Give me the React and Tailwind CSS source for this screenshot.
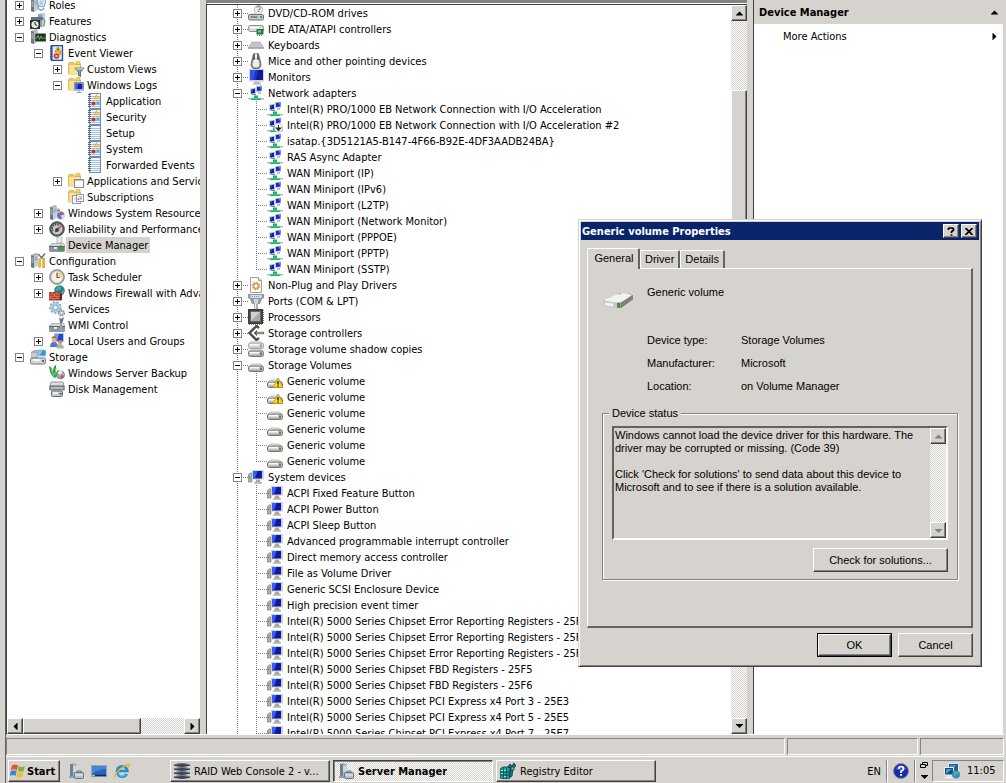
import React from "react";

const RAISED =
  "bg-[#d6d3ce] border border-t-white border-l-white border-b-[#424142] border-r-[#424142] shadow-[inset_-1px_-1px_0_#848284]";
const CHECKER =
  "bg-[conic-gradient(#fff_25%,#d6d3ce_0_50%,#fff_0_75%,#d6d3ce_0)] bg-[length:2px_2px]";
const DOTS_V =
  "bg-[repeating-linear-gradient(to_bottom,#848284_0_1px,transparent_1px_2px)]";
const DOTS_H =
  "bg-[repeating-linear-gradient(to_right,#848284_0_1px,transparent_1px_2px)]";
const UI_FONT = "font-['DejaVu_Sans_Condensed','DejaVu_Sans',sans-serif]";
const DIALOG_FONT = "font-['Liberation_Sans',Arial,sans-serif]";
const ROW_TEXT = "pt-[2px] leading-[14px]";

/* ---------- icon parts ---------- */

const Tower = () => (
  <g>
    <path d="M1 2l5-2 2 1v11l-4 3-3-1z" fill="#a5b0ba" />
    <path d="M1 2l3 1v12l-3-1z" fill="#6b7780" />
    <path d="M4 3l4-2v11l-4 3z" fill="#c3ccd3" />
    <path d="M1.500 5h2M1.500 7h2M1.500 9h2" stroke="#e8eef2" strokeWidth=".8" />
    <path d="M4.500 5l3-1M4.500 7l3-1" stroke="#7d8992" strokeWidth=".8" />
  </g>
);

const Folder = () => (
  <g>
    <path d="M0.500 2.500l1-1h4l1 1.500h6v10h-12z" fill="#f0c752" stroke="#d9ac3f" strokeWidth=".8" />
    <path d="M1 4.500h11V13H1z" fill="#fbe08a" />
    <path d="M1 5h11" stroke="#fff3c2" />
    <path d="M8 0.500h4v3h-4z" fill="#f5d264" stroke="#d7a93b" strokeWidth=".6" />
  </g>
);

const Notebook = () => (
  <g>
    <rect x="2.500" y=".5" width="11" height="15" fill="#f6f9ff" stroke="#7288ae" />
    <path d="M4 3.500h9M4 5.500h9M4 7.500h9M4 9.500h9M4 11.500h9M4 13.500h9" stroke="#9cc3e6" />
    <path d="M1 1.500h3M1 3.500h3M1 5.500h3M1 7.500h3M1 9.500h3M1 11.500h3M1 13.500h3" stroke="#5d6678" />
  </g>
);

const Toolbox = () => (
  <g>
    <path d="M0 9l3-3h12l1 3v5l-1 1H1l-1-1z" fill="#8d979d" />
    <path d="M1 9l2-2.500h12l.5 2.500z" fill="#d3dadd" />
    <path d="M0 9.500h16" stroke="#5b656b" />
    <rect x="5" y="10" width="3" height="2" fill="#e6eaec" />
  </g>
);

const NetBody = () => (
  <g>
    <path d="M8 1l6-.5v6L8 7z" fill="#b9c9ef" />
    <path d="M9 2l4.500-.5v4L9 6z" fill="#1c2fb4" />
    <path d="M11.500 1.500h2v4z" fill="#6d8df0" />
    <path d="M2 3.500l6-1v6.500l-6 .5z" fill="#c5d0ea" />
    <path d="M3 4.500l4-1v4.500l-4 .5z" fill="#14208f" />
    <path d="M3 4.500l2.500-.6-2 3.400z" fill="#4666dd" />
    <path d="M4 9.500h4M10 8h3" stroke="#78839b" />
    <path d="M6 10.500h4V13h3v2H3v-2h3z" fill="#1faf6c" />
    <path d="M0 13h3.500v1.500H0zM12.500 13H16v1.500h-3.500z" fill="#98c9ae" />
    <path d="M3 13.300h10" stroke="#70dca6" strokeWidth=".7" />
  </g>
);

const DiskBody = ({ y = 0 }) => (
  <g transform={`translate(0 ${y})`}>
    <path d="M1 6.500l2.500-2.500h9l2.500 2.500z" fill="#e2e2e2" stroke="#a4a4a4" strokeWidth=".6" />
    <rect x=".5" y="6" width="15" height="5.500" rx="1.800" fill="#c6c6c9" stroke="#77777b" />
    <path d="M2 7.700h9" stroke="#f8f8f8" strokeWidth="1.500" />
    <path d="M2 10.500h12" stroke="#9a9a9d" strokeWidth=".8" />
    <rect x="12" y="7.500" width="2" height="2.500" fill="#3f8d4f" />
  </g>
);

const ICONS = {
  roles: (
    <g>
      <Tower />
      <path d="M7 3l4-3 5 4-2 6-6-1z" fill="#d5e6f2" stroke="#6d93ae" strokeWidth=".8" />
      <path d="M9 8a3 3 0 1 0 5 3" fill="none" stroke="#8ca6b8" strokeWidth="1.500" />
      <path d="M10 4l3 2M9.500 6l3 1.500" stroke="#71a4c8" strokeWidth=".8" />
    </g>
  ),
  features: (
    <g>
      <path d="M8 1h6v13H8z" fill="#8f9ba4" />
      <path d="M8 1l3-1h4v12l-2 2h-1V2z" fill="#c5cdd3" />
      <rect x="1" y="4" width="12" height="3" fill="#5e7484" />
      <rect x="0" y="7" width="10" height="9" fill="#2c3138" />
      <circle cx="5" cy="11.500" r="3.600" fill="#e9ebdc" />
      <path d="M5 9v2.500l2 1" stroke="#222" fill="none" />
      <path d="M12 5l3 2-1 6" stroke="#54a06a" fill="none" />
    </g>
  ),
  diagnostics: (
    <g>
      <Tower />
      <rect x="5" y="4.500" width="11" height="8" fill="#22302a" stroke="#909a9c" strokeWidth=".8" />
      <path d="M5.500 9h1.500l1-2.500 1.500 4 1.500-3.500 1.500 3 1-1h2" fill="none" stroke="#72c43c" strokeWidth=".9" />
    </g>
  ),
  eventViewer: (
    <g>
      <Notebook />
      <path d="M2.500.5h11v15h-11z" fill="#dbe6fb" stroke="#234b9c" strokeWidth="1.300" />
      <path d="M1 2h3M1 4h3M1 6h3M1 8h3M1 10h3M1 12h3M1 14h3" stroke="#4d5a78" />
      <path d="M9 1.500l3.200 5.500H5.800z" fill="#f2c81c" stroke="#a8820d" strokeWidth=".6" />
      <path d="M9 3.500v2" stroke="#222" />
      <circle cx="7.500" cy="11" r="2.800" fill="#d9342b" />
      <path d="M6.500 10l2 2M8.500 10l-2 2" stroke="#fff" strokeWidth=".8" />
      <circle cx="11" cy="8.500" r="1.500" fill="#ef9b21" />
    </g>
  ),
  folderFilter: (
    <g>
      <Folder />
      <path d="M7 7h9l-3.500 4v4.500l-2-1V11z" fill="#6fa0b5" stroke="#3c6272" strokeWidth=".8" />
      <path d="M8 7.800h7" stroke="#d5e9f0" />
    </g>
  ),
  folderMonitor: (
    <g>
      <Folder />
      <rect x="6.500" y="5.500" width="9" height="7.500" fill="#cfd5ec" stroke="#8b95bd" />
      <rect x="7.500" y="6.500" width="7" height="5.500" fill="#1620ae" />
      <path d="M7.500 6.500h3l-1.500 5.500h-1.500z" fill="#3c66f0" />
      <path d="M11 13v2M8.500 15.500h5" stroke="#93a4b4" />
    </g>
  ),
  log: (
    <g>
      <Notebook />
      <path d="M9.500 1.500l3 4.500h-5.500z" fill="#f4cf36" stroke="#d3a41a" strokeWidth=".5" />
      <circle cx="6.500" cy="10.500" r="2.100" fill="#cf2f3c" />
      <rect x="9.500" y="8.500" width="3" height="3" fill="#6d9de8" />
    </g>
  ),
  logPlain: <Notebook />,
  folderWindow: (
    <g>
      <Folder />
      <rect x="6.500" y="6.500" width="9" height="8" fill="#fdfdfd" stroke="#7a8aa0" />
      <path d="M7 7.500h8" stroke="#b5c6da" />
    </g>
  ),
  folderCalendar: (
    <g>
      <Folder />
      <rect x="4.500" y="6.500" width="8" height="8" fill="#fff" stroke="#8499c0" />
      <rect x="8.500" y="5.500" width="7" height="7" fill="#fff" stroke="#8499c0" />
      <path d="M6 9h1.500M6 11h2M10 7.500h4" stroke="#b9c6df" />
      <path d="M9.500 10h2M13 8.500v2" stroke="#d94a4a" strokeWidth="1.400" />
    </g>
  ),
  sysres: (
    <g>
      <Tower />
      <path d="M8 3.500h3v10H8z" fill="#aab5bd" />
      <path d="M8 5.500h3M8 7.500h3" stroke="#6b7780" strokeWidth=".8" />
      <circle cx="11.500" cy="10.500" r="4" fill="#4f78d2" stroke="#eef" strokeWidth=".8" />
      <path d="M11.500 10.500V6.500a4 4 0 0 1 3.900 3z" fill="#e4564a" />
      <path d="M11.500 10.500l3.900-1a4 4 0 0 1-2 4.500z" fill="#d9dde9" />
    </g>
  ),
  gauge: (
    <g>
      <circle cx="8" cy="8" r="7.300" fill="#5a5d5f" stroke="#4b4e50" />
      <circle cx="8" cy="8" r="5.500" fill="#c4c9c8" />
      <path d="M4 10a4 4 0 0 1 6.500-5" fill="none" stroke="#41484a" strokeWidth="1.600" strokeDasharray="1.500 1" />
      <path d="M6 11l6-6" stroke="#d0392f" strokeWidth="1.500" />
      <circle cx="8" cy="9" r="1.900" fill="#3d4143" />
    </g>
  ),
  deviceManager: (
    <g>
      <path d="M8 0h5v6H8z" fill="#e8eceb" stroke="#9aa" strokeWidth=".7" />
      <Toolbox />
      <path d="M9 10h6v4H9z" fill="#39a354" />
      <path d="M11.500 7.500l2.500 2.500-2.500 1.500z" fill="#d8422c" />
    </g>
  ),
  configuration: (
    <g>
      <Tower />
      <path d="M8 1l4 4M15 .5l-4 5" stroke="#5c6a73" strokeWidth="1.400" fill="none" />
      <path d="M9.500 5.500v9M13.500 5v10" stroke="#dc9b1e" strokeWidth="2.600" />
      <path d="M9 6v8M13 6v8" stroke="#ffe08a" strokeWidth=".8" />
    </g>
  ),
  clock: (
    <g>
      <circle cx="8" cy="8" r="7.300" fill="#b0b7bd" stroke="#7b838a" />
      <circle cx="8" cy="8" r="5.700" fill="#f6f3e4" />
      <path d="M8 8V2.500A5.500 5.500 0 0 1 13.500 8z" fill="#f2d893" />
      <path d="M8 3.800V8.500h3" stroke="#6b6354" strokeWidth="1.200" fill="none" />
    </g>
  ),
  firewall: (
    <g>
      <circle cx="10.500" cy="5.500" r="5.200" fill="#2a6fc8" />
      <path d="M8 1.500q3-1.500 4 1t-3 3l-2.500 1zM12.500 6l3-1-1 4-2.500 1z" fill="#48b64e" />
      <path d="M0 7h11v8.500H0z" fill="#a83225" />
      <path d="M0 9h11M0 11.200h11M0 13.400h11M3 7v2M8 7v2M5.500 9v2.200M2 11.200v2.200M8 11.200v2.200M5 13.400v2" stroke="#e59b82" strokeWidth=".7" />
      <path d="M11 8l2 1v6l-2 .5z" fill="#6e1c15" />
    </g>
  ),
  gears: (
    <g fill="none">
      <circle cx="6.500" cy="6.500" r="5" stroke="#7fa9c6" strokeWidth="2.500" strokeDasharray="2.200 1.200" />
      <circle cx="6.500" cy="6.500" r="3.800" stroke="#a9cbe0" strokeWidth="2.200" />
      <circle cx="6.500" cy="6.500" r="2.300" stroke="#5785a6" strokeWidth=".8" />
      <circle cx="12.500" cy="12" r="2.700" stroke="#6d899d" strokeWidth="1.600" strokeDasharray="1.500 .8" />
      <circle cx="12.500" cy="12" r="1.700" stroke="#9db5c5" strokeWidth="1.200" />
    </g>
  ),
  wmi: (
    <g>
      <Toolbox />
      <path d="M10 0l2 2 3-2-1 4-1 2v9h-2V5z" fill="#6a757e" />
      <path d="M12 6v9" stroke="#cfd6da" />
    </g>
  ),
  users: (
    <g>
      <rect x="5.500" y=".5" width="9" height="8" fill="#2446c4" stroke="#b9c3e4" />
      <path d="M6 1h4l-2 7H6z" fill="#7396f0" />
      <circle cx="5" cy="7" r="2.300" fill="#e8b37c" />
      <path d="M1 14q0-5 4-5t4 5z" fill="#5575c9" />
      <circle cx="11" cy="9" r="2.100" fill="#c98c55" />
      <path d="M7.500 15.500q0-4.500 3.500-4.500t4 4.500z" fill="#a9b5a0" />
      <path d="M3 5q2-2 4 0" stroke="#9c6a2c" strokeWidth="1.400" fill="none" />
    </g>
  ),
  storage: (
    <g>
      <path d="M1 3l3-2h4v12H1z" fill="#a7b0b6" />
      <path d="M1.500 5h5M1.500 7h5" stroke="#e6ebee" />
      <rect x="8" y="1" width="8" height="6" fill="#2b9ad0" stroke="#b8cdd8" />
      <path d="M9 2h3l-2 4H9z" fill="#8bd6f2" />
      <rect x=".5" y="9" width="15" height="6" rx="1.500" fill="#d3d7da" stroke="#72797d" />
      <path d="M3 11h7" stroke="#fff" strokeWidth="1.500" />
      <rect x="12" y="11" width="2" height="2" fill="#4d6673" />
    </g>
  ),
  backup: (
    <g>
      <path d="M0 1q3 1 4 6 0-6 3-7 0 5 0 8 2-4 3-3-1 6-4 8-5-2-6-12z" fill="#2e9b45" />
      <path d="M2 4q2 4 3 8M7 3q-1 4-1 7" stroke="#8be193" strokeWidth=".9" fill="none" />
      <circle cx="11.500" cy="10" r="4" fill="#a5adb3" stroke="#6b7379" strokeWidth=".7" />
      <path d="M11.500 10l-3-2.500a4.200 4.200 0 0 1 5-.8z" fill="#e9eef1" />
      <circle cx="13" cy="11.500" r="1.500" fill="#c05a46" />
    </g>
  ),
  diskMgmt: (
    <g>
      <path d="M2 1h12l1 4H1z" fill="#dadddf" stroke="#7e8589" strokeWidth=".8" />
      <rect x=".8" y="5" width="14.400" height="4" fill="#8a9195" stroke="#596063" strokeWidth=".7" />
      <path d="M2 7h12" stroke="#dfe3e5" />
      <rect x="2.500" y="10" width="11" height="5.500" rx="1" fill="#c4c9cc" stroke="#666d70" />
      <path d="M4 12h5" stroke="#fff" strokeWidth="1.300" />
      <rect x="10.500" y="12" width="2" height="1.500" fill="#555" />
    </g>
  ),
  dvd: (
    <g>
      <circle cx="10.500" cy="4.500" r="4.200" fill="#eceeef" stroke="#a3a8aa" strokeWidth=".8" />
      <path d="M8.500 2.500q2.500-2 3.500 0t-2 2.500M9.500 6.500h2" stroke="#858c90" strokeWidth="1.100" fill="none" />
      <path d="M1 10l3-2h9l2.500 2z" fill="#e0e0e0" />
      <rect x=".5" y="9.500" width="15" height="5.500" rx="1.500" fill="#c9cacb" stroke="#6e6e70" />
      <path d="M2.500 12h7" stroke="#65686a" strokeWidth="1.300" />
      <rect x="12" y="11" width="2" height="2" fill="#47a04f" />
    </g>
  ),
  ide: (
    <g>
      <rect x=".5" y="4.500" width="15" height="6" rx="2" fill="#d9dadb" stroke="#8d8f90" />
      <path d="M2 6.500h9" stroke="#fff" strokeWidth="1.600" />
      <rect x="8.500" y="8" width="7" height="5.500" fill="#1e7a47" />
      <path d="M9.500 13.500v1.500M11.500 13.500v1.500M13.500 13.500v1.500" stroke="#6aa57e" />
      <rect x="10" y="9.500" width="3" height="2" fill="#7fd09c" />
    </g>
  ),
  keyboard: (
    <g>
      <path d="M3.500 4.500h9L16 10v1.500H0V10z" fill="#d4d6dc" />
      <path d="M3.500 5.500h9M2.500 7.200h11M1.500 9h13" stroke="#8c90a0" strokeDasharray="1 1" />
      <path d="M0 11h16" stroke="#77798a" />
    </g>
  ),
  mouse: (
    <g>
      <path d="M5.500 1Q8-1 10.500 1l2.500 10.500q0 4.300-5 4.300t-5-4.300z" fill="#8b8e91" stroke="#4c4e51" strokeWidth=".8" />
      <path d="M6 1.500Q8 0 10 1.500L11 7H5z" fill="#55585b" />
      <path d="M8 .5v5" stroke="#f6f6f6" strokeWidth="2" />
      <path d="M8 5.500q3.500 1.500 3.500 5.500 0 3.500-3.500 3.500T4.500 11Q4.500 7 8 5.500z" fill="#eceeef" />
    </g>
  ),
  monitor: (
    <g>
      <rect x="1" y="0" width="15" height="12.500" fill="#d0d3de" />
      <rect x="2" y="1" width="13" height="10" fill="#10189a" />
      <path d="M2 1h6L5.500 11H2z" fill="#2f55e8" />
      <path d="M8 1h2.500L8 11H5.500z" fill="#1b34c4" />
      <path d="M7 12.500h4l1.500 2h-7z" fill="#b6b9b4" />
      <path d="M5 15h8" stroke="#a3a79e" />
    </g>
  ),
  net: <NetBody />,
  netDown: (
    <g>
      <NetBody />
      <circle cx="11.500" cy="11" r="4.200" fill="#fff" stroke="#aaa" strokeWidth=".7" />
      <path d="M11.500 8v4M9.300 11l2.200 2.500L13.700 11z" stroke="#333" strokeWidth="1.200" fill="#333" />
    </g>
  ),
  nonPnp: (
    <g>
      <path d="M2.500.5h8l3 3v12h-11z" fill="#fafafa" stroke="#a4a09a" />
      <path d="M10.500.5v3h3" fill="#e0ddd8" stroke="#a4a09a" />
      <circle cx="8" cy="9" r="2.500" fill="none" stroke="#d59a4e" strokeWidth="1.500" />
      <circle cx="8" cy="9" r="3.700" fill="none" stroke="#d59a4e" strokeWidth="1.200" strokeDasharray="1.500 1.400" />
    </g>
  ),
  ports: (
    <g>
      <path d="M0 1h16v4l-2 1-2 5H4L2 6 0 5z" fill="#8d9ba3" />
      <path d="M2.500 2h11v3h-11z" fill="#d9e1e5" />
      <path d="M4 3.500h8" stroke="#889" strokeDasharray="1 1" />
      <path d="M5.500 6h5l-1 5h-3z" fill="#cfd8dc" />
      <path d="M6 11h4v5H6z" fill="#9db0bb" />
      <path d="M7.500 11v5" stroke="#e5eef2" />
    </g>
  ),
  cpu: (
    <g>
      <rect x="0" y="0" width="15" height="15" fill="#3f403f" />
      <path d="M1 15.500h14M15.500 1v14" stroke="#8a8250" strokeDasharray="1 1" />
      <rect x="2" y="2" width="11" height="11" fill="#6a6b6a" />
      <rect x="3" y="3" width="9" height="9" fill="#a9aba9" />
      <path d="M3 3h9l-9 9z" fill="#cfd1cf" />
    </g>
  ),
  storageCtl: (
    <g fill="none">
      <path d="M11 3L8.500 1 1.500 8l7 7L11 13" stroke="#4b4c4b" strokeWidth="2.400" />
      <path d="M6.500 8H16" stroke="#666" strokeWidth="2.400" />
      <path d="M9 5v6L6 8z" fill="#4b4c4b" />
      <path d="M8 8h7" stroke="#c8c8c8" strokeWidth=".8" />
    </g>
  ),
  shadow: (
    <g>
      <g opacity=".65"><DiskBody y={-4} /></g>
      <DiskBody y={4} />
    </g>
  ),
  volume: <DiskBody y={3} />,
  volumeWarn: (
    <g>
      <DiskBody y={3} />
      <path d="M11 5l5 9.500H6z" fill="#fbdc24" stroke="#b38e0a" strokeWidth=".8" />
      <path d="M11 8v3.500M11 12.500v1.200" stroke="#111" strokeWidth="1.300" />
    </g>
  ),
  sysdev: (
    <g>
      <path d="M0 6l2-2h2v9H1l-1 0z" fill="#aeb4a6" stroke="#70766c" strokeWidth=".6" />
      <path d="M1.500 7v3" stroke="#6c9a6c" />
      <rect x="4" y="1" width="12" height="9.500" fill="#cdd0df" />
      <rect x="5" y="2" width="9" height="7.500" fill="#1019a0" />
      <path d="M5 2h4.500L7 9.500H5z" fill="#3560ec" />
      <path d="M8.500 10.500h3l1.500 3H7z" fill="#a6aa9e" />
      <path d="M6 14h8" stroke="#8f9488" />
    </g>
  ),
  flag: (
    <g>
      <path d="M2 2.500q3-2 6 0L6.800 7.300q-3-2-6 0z" fill="#e8532a" />
      <path d="M8.800 3q3 1.800 6 .2L13.700 8q-3 1.700-6-.2z" fill="#7bb63a" />
      <path d="M.6 8.300q3-2 6 0L5.400 13.100q-3-2-5.400 0z" fill="#3d82d6" />
      <path d="M7.400 8.800q3 1.800 6 .2l-1.200 4.800q-3 1.700-6-.2z" fill="#f5c02a" />
    </g>
  ),
  server: (
    <g>
      <path d="M2 1l3-1 4 1v12H2z" fill="#a9b8c2" />
      <path d="M2 1h3v12H2z" fill="#70818d" />
      <path d="M5 4h4M5 6h4M5 8h4" stroke="#eff4f6" />
      <path d="M1 13h8v2H1z" fill="#8fa0ac" />
      <rect x="6.500" y="9.500" width="9" height="6" rx="1" fill="#b5c1ca" stroke="#66757f" />
      <path d="M9 9.500V8h4v1.500" fill="none" stroke="#66757f" />
      <path d="M7 12h8" stroke="#eef3f5" />
    </g>
  ),
  desktop: (
    <g>
      <rect x=".5" y="2.500" width="15" height="11" fill="#2365bd" stroke="#8fa6bd" />
      <path d="M1 3h14v3Q8 6 1 11z" fill="#4586d0" />
      <path d="M1 12.500h14" stroke="#1c2b45" strokeWidth="1.500" />
      <rect x="1" y="11.700" width="3" height="1.500" fill="#9cc0d8" />
    </g>
  ),
  ie: (
    <g fill="none">
      <path d="M12.800 11a5.200 5.200 0 1 1 .6-3H4.500" stroke="#1e8fdc" strokeWidth="2.700" />
      <path d="M12 11.500A5.200 5.200 0 0 1 4 11" stroke="#6fc5f2" strokeWidth="1" />
      <path d="M1.500 14.500Q-.5 12 6 6.500T15 1.500q1 1-1.500 3.500" stroke="#f0b323" strokeWidth="1.500" />
    </g>
  ),
  raid: (
    <g>
      {[0, 4, 8, 12].map((y) => (
        <g key={y} transform={`translate(0 ${y})`}>
          <path d="M0 1.500Q8-1.500 16 1.500v1.300Q8 5 0 2.800z" fill="#3a3f50" />
          <path d="M1 1.500q7-2 14 0" stroke="#9298aa" strokeWidth=".7" fill="none" />
        </g>
      ))}
    </g>
  ),
  regedit: (
    <g>
      <path d="M0 6l3-2h6l1 2v9l-3 1-7-1z" fill="#1aa7a6" stroke="#0c3b3d" strokeWidth=".8" />
      <path d="M0 9h10M0 12h10M3.300 5v10.500M6.600 5v11" stroke="#0b3436" strokeWidth=".7" />
      <path d="M1 7.500h2M4 7.500h2M1 10.500h2M4 13.500h2" stroke="#8ff0ea" />
      <path d="M8 4l2-3 2 2 2-3 2 3-3 2-1 8-2 1-1-1 2-8z" fill="#1b7d80" stroke="#0a2b2d" strokeWidth=".8" />
      <path d="M11 4h3v3h-3z" fill="#49cfc9" stroke="#0a2b2d" strokeWidth=".7" />
    </g>
  ),
  help: (
    <g>
      <circle cx="8" cy="8" r="7.500" fill="#1a2c9e" stroke="#7f8bbb" />
      <path d="M2.500 6a6 6 0 0 1 11 0q-5 3-11 0z" fill="#3c55c8" />
      <path d="M5.700 6q0-2.500 2.400-2.500T10.500 6Q10.500 7.200 8 8.300V10" fill="none" stroke="#fff" strokeWidth="1.700" />
      <rect x="7.100" y="11" width="1.800" height="1.800" fill="#fff" />
    </g>
  ),
  trayNet: (
    <g>
      <rect x="4.500" y=".5" width="10" height="9.500" fill="#1b5f9c" stroke="#dfe8f0" />
      <path d="M6 2h7l-7 6z" fill="#3f90cc" />
      <rect x=".5" y="4.500" width="9" height="7.500" fill="#164b82" stroke="#e8eef4" />
      <path d="M2 6h6l-6 5z" fill="#459ad2" />
      <path d="M1 14.500h9M5 12v2" stroke="#f5f5f5" strokeWidth="1.500" />
      <circle cx="12" cy="11.500" r="4" fill="#2f8ed6" />
      <path d="M10 9q3-2 4 0t-2 2.500l-2 2z" fill="#4fc04d" />
    </g>
  ),
  driveLarge: (
    <g>
      <path d="M.5 7L7.500 3.500l6.500-.3 1.500 1v2l-6 4.300Q5 10.500 .5 9.200z" fill="#a4a5a6" />
      <path d="M.8 6.600L7.700 3.500q3.500-1 7.300.5L9.500 7.700Q5 8.200 .8 6.600z" fill="#f3f3f2" />
      <path d="M9.500 7.700L15.500 4v2.100l-6 4.400z" fill="#7f8081" />
      <path d="M.5 7l9 .9v2.500Q4 10.800 .5 9.200z" fill="#c9cbce" />
      <path d="M1.500 7.800l4 .6v1.300l-4-.7z" fill="#f4f6fb" />
      <path d="M7.800 3.600l1-.5 1 .5z" fill="#8b8b8b" />
      <rect x="7.500" y="7.900" width="1.800" height="2.500" fill="#478e3e" />
    </g>
  ),
};

const Icon = ({ name, className = "size-4" }) => (
  <svg viewBox="0 0 16 16" className={`${className} shrink-0`} aria-hidden="true">
    {ICONS[name]}
  </svg>
);

const Arrow = ({ dir, className = "text-black" }) => {
  const d = {
    up: "M0 5.500h7v-.5L3.500 1.500 0 5z",
    down: "M0 2h7v.5L3.500 6 0 2.500z",
    left: "M5.500 0v7H5L1.500 3.500 5 0z",
    right: "M1.500 0v7H2l3.500-3.500L2 0z",
  }[dir];
  return (
    <svg viewBox="0 0 7 7" className={`size-[7px] ${className}`} aria-hidden="true">
      <path d={d} fill="currentColor" />
    </svg>
  );
};

const ScrollButton = ({ dir, label, disabled }) => (
  <button
    type="button"
    aria-label={label}
    disabled={disabled}
    className={`flex size-4 shrink-0 items-center justify-center ${RAISED}`}
  >
    <Arrow dir={dir} className={disabled ? "text-[#848284]" : "text-black"} />
  </button>
);

const Expander = ({ open, label }) => (
  <button
    type="button"
    aria-label={`${open ? "Collapse" : "Expand"} ${label}`}
    className="relative flex size-[9px] items-center justify-center border border-[#848284] bg-white"
  >
    <svg viewBox="0 0 5 5" className="size-[5px] shrink-0" aria-hidden="true">
      <path d={open ? "M0 2h5v1H0z" : "M0 2h2V0h1v2h2v1H3v2H2V3H0z"} fill="#000" />
    </svg>
  </button>
);

/* ---------- left navigation ---------- */

const NAV = [
  [0, "+", "roles", "Roles"],
  [0, "+", "features", "Features"],
  [0, "-", "diagnostics", "Diagnostics"],
  [1, "-", "eventViewer", "Event Viewer"],
  [2, "+", "folderFilter", "Custom Views"],
  [2, "-", "folderMonitor", "Windows Logs"],
  [3, "", "log", "Application"],
  [3, "", "log", "Security"],
  [3, "", "logPlain", "Setup"],
  [3, "", "log", "System"],
  [3, "", "logPlain", "Forwarded Events"],
  [2, "+", "folderWindow", "Applications and Services Logs"],
  [2, "", "folderCalendar", "Subscriptions"],
  [1, "+", "sysres", "Windows System Resource Manager"],
  [1, "+", "gauge", "Reliability and Performance"],
  [1, "", "deviceManager", "Device Manager"],
  [0, "-", "configuration", "Configuration"],
  [1, "+", "clock", "Task Scheduler"],
  [1, "+", "firewall", "Windows Firewall with Advanced Security"],
  [1, "", "gears", "Services"],
  [1, "", "wmi", "WMI Control"],
  [1, "+", "users", "Local Users and Groups"],
  [0, "-", "storage", "Storage"],
  [1, "", "backup", "Windows Server Backup"],
  [1, "", "diskMgmt", "Disk Management"],
];

const NAV_INDENT = ["pl-[3px]", "pl-[22px]", "pl-[41px]", "pl-[60px]"];

const NavTree = () => (
  <nav className="flex w-[193px] shrink-0 flex-col bg-white">
    <div className="min-h-0 flex-1 overflow-hidden">
      <ul className="-mt-[3px]">
        {NAV.map(([level, mark, icon, label]) => (
          <li key={label} className={`flex h-4 items-center whitespace-nowrap ${NAV_INDENT[level]}`}>
            <span className="flex w-5 shrink-0 items-center pl-[5px]">
              {mark && <Expander open={mark === "-"} label={label} />}
            </span>
            <Icon name={icon} />
            <span
              className={`ml-px px-[2px] ${ROW_TEXT} ${label === "Device Manager" ? "bg-[#d6d3ce]" : ""}`}
            >
              {label}
            </span>
          </li>
        ))}
      </ul>
    </div>
    <div className={`flex h-4 shrink-0 ${CHECKER}`}>
      <ScrollButton dir="left" label="Scroll left" />
      <div className={`w-[118px] ${RAISED}`} />
      <div className="flex-1" />
      <ScrollButton dir="right" label="Scroll right" />
    </div>
  </nav>
);

/* ---------- device tree ---------- */

const DEVICES = [
  { icon: "dvd", label: "DVD/CD-ROM drives" },
  { icon: "ide", label: "IDE ATA/ATAPI controllers" },
  { icon: "keyboard", label: "Keyboards" },
  { icon: "mouse", label: "Mice and other pointing devices" },
  { icon: "monitor", label: "Monitors" },
  {
    icon: "net",
    label: "Network adapters",
    children: [
      ["net", "Intel(R) PRO/1000 EB Network Connection with I/O Acceleration"],
      ["netDown", "Intel(R) PRO/1000 EB Network Connection with I/O Acceleration #2"],
      ["net", "isatap.{3D5121A5-B147-4F66-B92E-4DF3AADB24BA}"],
      ["net", "RAS Async Adapter"],
      ["net", "WAN Miniport (IP)"],
      ["net", "WAN Miniport (IPv6)"],
      ["net", "WAN Miniport (L2TP)"],
      ["net", "WAN Miniport (Network Monitor)"],
      ["net", "WAN Miniport (PPPOE)"],
      ["net", "WAN Miniport (PPTP)"],
      ["net", "WAN Miniport (SSTP)"],
    ],
  },
  { icon: "nonPnp", label: "Non-Plug and Play Drivers" },
  { icon: "ports", label: "Ports (COM & LPT)" },
  { icon: "cpu", label: "Processors" },
  { icon: "storageCtl", label: "Storage controllers" },
  { icon: "shadow", label: "Storage volume shadow copies" },
  {
    icon: "volume",
    label: "Storage Volumes",
    children: [
      ["volumeWarn", "Generic volume"],
      ["volumeWarn", "Generic volume"],
      ["volume", "Generic volume"],
      ["volume", "Generic volume"],
      ["volume", "Generic volume"],
      ["volume", "Generic volume"],
    ],
  },
  {
    icon: "sysdev",
    label: "System devices",
    continues: true,
    children: [
      "ACPI Fixed Feature Button",
      "ACPI Power Button",
      "ACPI Sleep Button",
      "Advanced programmable interrupt controller",
      "Direct memory access controller",
      "File as Volume Driver",
      "Generic SCSI Enclosure Device",
      "High precision event timer",
      "Intel(R) 5000 Series Chipset Error Reporting Registers - 25F0",
      "Intel(R) 5000 Series Chipset Error Reporting Registers - 25F0",
      "Intel(R) 5000 Series Chipset Error Reporting Registers - 25F0",
      "Intel(R) 5000 Series Chipset FBD Registers - 25F5",
      "Intel(R) 5000 Series Chipset FBD Registers - 25F6",
      "Intel(R) 5000 Series Chipset PCI Express x4 Port 3 - 25E3",
      "Intel(R) 5000 Series Chipset PCI Express x4 Port 5 - 25E5",
      "Intel(R) 5000 Series Chipset PCI Express x4 Port 7 - 25E7",
    ].map((label) => ["sysdev", label]),
  },
];

const Guide = ({ branch, end, children }) => (
  <span className="relative flex h-4 w-5 shrink-0 items-center pl-[5px] not-last:w-[19px]">
    <span className={`absolute top-0 left-[9px] w-px ${end ? "h-2" : "h-4"} ${DOTS_V}`} />
    {branch && <span className={`absolute top-2 right-0 left-[9px] h-px ${DOTS_H}`} />}
    {children}
  </span>
);

const DeviceTree = () => (
  <main className="flex min-w-0 flex-1 border-t-[3px] border-[#848284]">
    <div className="flex min-w-0 flex-1 border-t border-l border-white border-l-[#424142]">
      <div className="flex min-w-0 flex-1 border-t border-[#424142] bg-white">
        <ul className="min-w-0 flex-1 overflow-hidden pl-[21px]">
          {DEVICES.map((group) => (
            <li key={group.label}>
              <div className="flex h-4 items-center whitespace-nowrap">
                <span className="flex">
                  <Guide branch>
                    <Expander open={!!group.children} label={group.label} />
                  </Guide>
                </span>
                <Icon name={group.icon} />
                <span className={`pl-1 ${ROW_TEXT}`}>{group.label}</span>
              </div>
              {group.children && (
                <ul>
                  {group.children.map(([icon, label], i) => (
                    <li key={i} className="flex h-4 items-center whitespace-nowrap">
                      <span className="flex">
                        <Guide />
                        <Guide
                          branch
                          end={!group.continues && i === group.children.length - 1}
                        />
                      </span>
                      <Icon name={icon} />
                      <span className={`pl-1 ${ROW_TEXT}`}>{label}</span>
                    </li>
                  ))}
                </ul>
              )}
            </li>
          ))}
        </ul>
        <div className={`flex w-4 shrink-0 flex-col ${CHECKER}`}>
          <ScrollButton dir="up" label="Scroll up" />
          <div className="flex-[69]" />
          <div className={`flex-[450] ${RAISED}`} />
          <div className="flex-[178]" />
          <ScrollButton dir="down" label="Scroll down" />
        </div>
      </div>
    </div>
  </main>
);

/* ---------- actions pane ---------- */

const Actions = () => (
  <aside className="flex w-[251px] shrink-0 flex-col border-r border-l border-l-[#424142] border-r-[#d6d3ce] bg-white">
    <h2 className="flex h-6 items-center justify-between bg-[#d6d3ce] pr-[5px] pl-[5px] font-bold">
      Device Manager
      <Arrow dir="up" />
    </h2>
    <button type="button" className="flex h-6 items-center justify-between pr-[5px] pl-[29px]">
      More Actions
      <Arrow dir="right" />
    </button>
  </aside>
);

/* ---------- properties dialog ---------- */

const Tab = ({ children, active }) => (
  <button
    type="button"
    role="tab"
    aria-selected={!!active}
    className={`relative rounded-t-[2px] border-t border-l border-r-2 border-t-white border-l-white border-r-[#636163] bg-[#d6d3ce] ${
      active ? "-mb-px h-[21px] w-[53px] pb-px pl-[2px]" : "h-[18px] px-[4px]"
    }`}
  >
    {children}
  </button>
);

const DETAILS = [
  ["Device type:", "Storage Volumes"],
  ["Manufacturer:", "Microsoft"],
  ["Location:", "on Volume Manager"],
];

const STATUS_TEXT = `Windows cannot load the device driver for this hardware. The
driver may be corrupted or missing. (Code 39)

Click 'Check for solutions' to send data about this device to
Microsoft and to see if there is a solution available.`;

const Dialog = () => (
  <section
    role="dialog"
    aria-labelledby="dialog-title"
    className={`absolute top-[219px] left-[578px] w-[404px] border border-t-[#d6d3ce] border-r-[#424142] border-b-[#424142] border-l-[#d6d3ce] bg-[#d6d3ce] p-[2px] shadow-[inset_1px_1px_0_#fff,inset_-1px_-1px_0_#848284] ${DIALOG_FONT}`}
  >
    <header className={`flex h-[18px] items-center bg-[#08246b] pr-[2px] pl-px text-white ${UI_FONT}`}>
      <h1 id="dialog-title" className="flex-1 font-bold">
        Generic volume Properties
      </h1>
      <div className="flex gap-[2px]">
        <button
          type="button"
          aria-label="Help"
          className={`flex h-[14px] w-4 items-center justify-center ${RAISED}`}
        >
          <svg viewBox="0 0 8 9" className="h-[9px] w-2" aria-hidden="true">
            <path d="M1.500 3V1.500L2.500 1h3l1 .7V3L4.500 4.800V6M3.600 8h1.800" fill="none" stroke="#000" strokeWidth="1.700" />
          </svg>
        </button>
        <button
          type="button"
          aria-label="Close"
          className={`flex h-[14px] w-4 items-center justify-center ${RAISED}`}
        >
          <svg viewBox="0 0 8 7" className="h-[7px] w-2" aria-hidden="true">
            <path d="M0.500 0l7 7M7.500 0l-7 7" stroke="#000" strokeWidth="1.700" />
          </svg>
        </button>
      </div>
    </header>

    <div className="px-[6px] pt-2 pb-[7px]">
      <div role="tablist" className="flex items-end">
        <Tab active>General</Tab>
        <Tab>Driver</Tab>
        <Tab>Details</Tab>
      </div>
      <div
        role="tabpanel"
        className="border border-r-2 border-b-2 border-t-white border-r-[#636163] border-b-[#636163] border-l-white pt-[15px] pr-[13px] pb-[46px] pl-[14px]"
      >
        <div className="flex">
          <Icon name="driveLarge" className="mt-[3px] size-8" />
          <p className="ml-[13px] leading-4">Generic volume</p>
        </div>
        <dl className="mt-[10px] ml-[45px]">
          {DETAILS.map(([name, value]) => (
            <div key={name} className="flex h-[23px] items-center">
              <dt className="w-[94px]">{name}</dt>
              <dd>{value}</dd>
            </div>
          ))}
        </dl>
        <fieldset className="mt-[7px] border border-[#848284] px-[9px] pb-[7px] shadow-[1px_1px_0_#fff,inset_1px_1px_0_#fff]">
          <legend className="-ml-[3px] bg-[#d6d3ce] px-[3px] leading-4">
            <label htmlFor="status">Device status</label>
          </legend>
          <div className="mt-[5px] flex h-[114px] border-2 border-t-[#636163] border-r-white border-b-white border-l-[#636163]">
            <textarea
              id="status"
              readOnly
              value={STATUS_TEXT}
              className="min-w-0 flex-1 resize-none overflow-hidden whitespace-pre p-px leading-[13px] outline-none"
            />
            <div className={`flex w-4 shrink-0 flex-col justify-between ${CHECKER}`}>
              <ScrollButton dir="up" label="Scroll status up" disabled />
              <ScrollButton dir="down" label="Scroll status down" disabled />
            </div>
          </div>
          <div className="mt-[8px] flex justify-end">
            <button type="button" className={`h-6 w-[135px] ${RAISED}`}>
              Check for solutions...
            </button>
          </div>
        </fieldset>
      </div>
      <div className="mt-[5px] flex justify-end gap-[6px]">
        <button type="button" className="h-6 w-[75px] border border-black">
          <span className={`flex h-full items-center justify-center ${RAISED}`}>OK</span>
        </button>
        <button type="button" className={`h-6 w-[75px] ${RAISED}`}>
          Cancel
        </button>
      </div>
    </div>
  </section>
);

/* ---------- bottom bars ---------- */

const PANEL = "border border-t-[#848284] border-l-[#848284] border-b-white border-r-white";

const StatusBar = () => (
  <footer className="flex h-[22px] shrink-0 gap-[2px] border-b border-white pt-[3px] pb-px">
    <div className={`flex-1 ${PANEL}`} />
    <div className={`w-[131px] ${PANEL}`} />
    <div className={`w-[84px] ${PANEL}`} />
  </footer>
);

const Task = ({ icon, children, active }) => (
  <button
    type="button"
    className={`flex h-[22px] w-[160px] items-center gap-[4px] pl-[3px] ${
      active
        ? `border border-t-[#424142] border-l-[#424142] border-r-white border-b-white pt-px pl-[4px] font-bold shadow-[inset_1px_1px_0_#848284] ${CHECKER}`
        : RAISED
    }`}
  >
    <Icon name={icon} />
    <span className="truncate pt-px">{children}</span>
  </button>
);

const Taskbar = () => (
  <div className="flex h-[26px] shrink-0 items-center pt-px pl-[2px]">
    <button
      type="button"
      className={`flex h-[22px] w-[52px] items-center gap-px pl-px font-bold ${RAISED}`}
    >
      <Icon name="flag" />
      <span className="pt-px">Start</span>
    </button>
    <div className="ml-2 flex gap-[7px]">
      <a href="#server" aria-label="Server Manager"><Icon name="server" /></a>
      <a href="#desktop" aria-label="Show desktop"><Icon name="desktop" /></a>
      <a href="#browser" aria-label="Internet Explorer"><Icon name="ie" /></a>
    </div>
    <div className="ml-10 flex gap-[3px]">
      <Task icon="raid">RAID Web Console 2 - v...</Task>
      <Task icon="server" active>Server Manager</Task>
      <Task icon="regedit">Registry Editor</Task>
    </div>
    <div className="ml-auto flex h-[22px] items-center">
      <span className="pt-px pr-[5px]">EN</span>
      <span className="h-full w-[2px] border-r border-l border-r-white border-l-[#848284]" />
      <button type="button" aria-label="Help center" className="px-[5px]">
        <Icon name="help" />
      </button>
      <span className="h-full w-[2px] border-r border-l border-r-white border-l-[#848284]" />
      <button type="button" aria-label="Language options" className="flex h-full flex-col items-center justify-between px-1 py-[2px]">
        <svg viewBox="0 0 8 6" className="h-[6px] w-2" aria-hidden="true">
          <path d="M2.500 3V.5h5v3H5.500M.5 2.500h5v3h-5z" fill="none" stroke="#000" />
        </svg>
        <Arrow dir="down" />
      </button>
      <div className={`flex h-full w-[72px] items-center gap-[7px] pl-[11px] ${PANEL}`}>
        <Icon name="trayNet" />
        <time>11:05</time>
      </div>
    </div>
  </div>
);

export default function App() {
  return (
    <div
      className={`relative flex h-screen overflow-hidden bg-[#d6d3ce] text-[11px] leading-[13px] text-black ${UI_FONT}`}
    >
      <div className="w-[6px] shrink-0 border-r border-[#636163]" />
      <div className="flex min-w-0 flex-1 flex-col pr-[2px]">
        <div className="flex min-h-0 flex-1 gap-[6px] border-b border-l border-b-white border-l-[#424142]">
          <NavTree />
          <DeviceTree />
          <Actions />
        </div>
        <StatusBar />
        <Taskbar />
      </div>
      <Dialog />
    </div>
  );
}
